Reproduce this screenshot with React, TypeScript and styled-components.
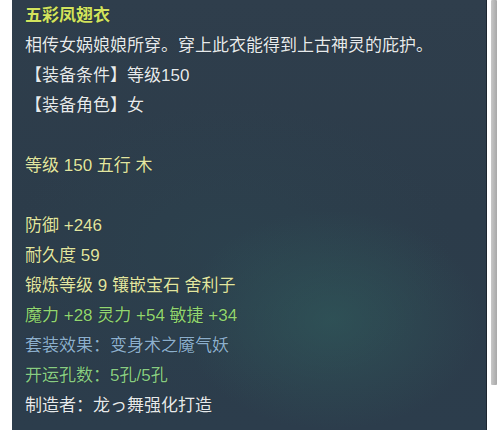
import React from "react";
import styled, { createGlobalStyle } from "styled-components";

const Global = createGlobalStyle`
  html, body { margin: 0; padding: 0; background: #ffffff; }
  body { font-family: "Liberation Sans", "Noto Sans CJK SC", sans-serif; }
`;

const Page = styled.div`
  display: flex;
  align-items: flex-start;
  width: 500px;
  height: 430px;
  padding-left: 12px;
  box-sizing: border-box;
  overflow: hidden;
`;

const Panel = styled.div`
  width: 475px;
  height: 430px;
  box-sizing: border-box;
  padding: 1px 0 0 13px;
  border-right: 1px solid #1c2630;
  background:
    radial-gradient(ellipse 150px 110px at 320px 320px, rgba(48, 92, 92, 0.6), rgba(48, 92, 92, 0) 100%),
    radial-gradient(ellipse 220px 150px at 220px 250px, rgba(44, 72, 82, 0.4), rgba(44, 72, 82, 0) 100%),
    linear-gradient(180deg, #2f3e4c 0%, #2c3c4a 50%, #2c3d4c 100%);
`;

const Scroll = styled.div`
  width: 6px;
  height: 385px;
  margin-left: 4px;
  background: linear-gradient(90deg, #c8c8c8, #a8a8a8);
  border-radius: 1px;
`;

type Tone = "title" | "white" | "yellow" | "green" | "blue" | "lime";

const colors: Record<Tone, string> = {
  title: "#d2e35e",
  white: "#e6eaec",
  yellow: "#e1e6a2",
  green: "#92d672",
  blue: "#8cafcc",
  lime: "#88cc84",
};

const Line = styled.div<{ $tone: Tone }>`
  height: 30px;
  line-height: 30px;
  font-size: 17px;
  white-space: nowrap;
  color: ${(p) => colors[p.$tone]};
  font-weight: ${(p) => (p.$tone === "title" ? 700 : 400)};
  text-shadow: 0 0 1px rgba(0, 0, 0, 0.6);
`;

const Blank = styled.div`
  height: 30px;
`;

export default function App() {
  return (
    <>
      <Global />
      <Page>
        <Panel>
          <Line $tone="title">五彩凤翅衣</Line>
          <Line $tone="white">相传女娲娘娘所穿。穿上此衣能得到上古神灵的庇护。</Line>
          <Line $tone="white">【装备条件】等级150</Line>
          <Line $tone="white">【装备角色】女</Line>
          <Blank />
          <Line $tone="yellow">等级 150 五行 木</Line>
          <Blank />
          <Line $tone="yellow">防御 +246</Line>
          <Line $tone="yellow">耐久度 59</Line>
          <Line $tone="yellow">锻炼等级 9 镶嵌宝石 舍利子</Line>
          <Line $tone="green">魔力 +28 灵力 +54 敏捷 +34</Line>
          <Line $tone="blue">套装效果：变身术之魇气妖</Line>
          <Line $tone="lime">开运孔数：5孔/5孔</Line>
          <Line $tone="white">制造者：龙っ舞强化打造</Line>
        </Panel>
        <Scroll />
      </Page>
    </>
  );
}
